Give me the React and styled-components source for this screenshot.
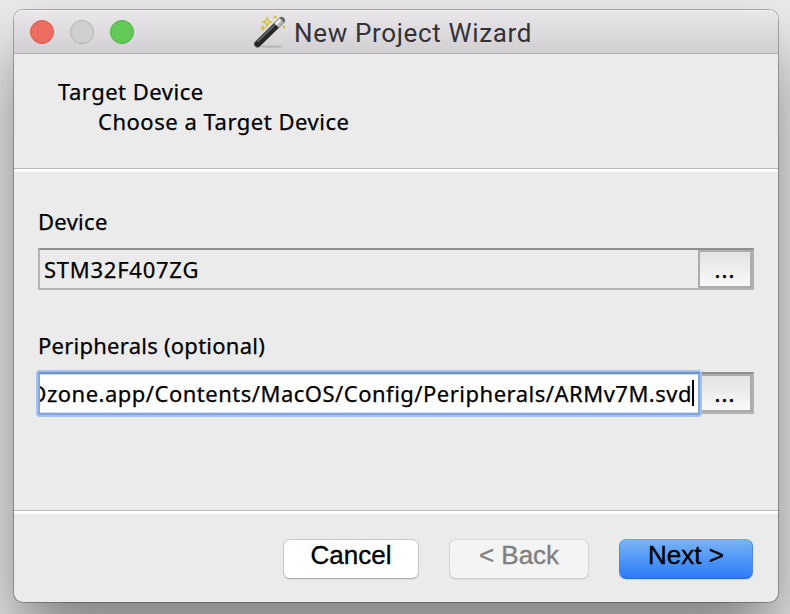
import React from "react";
import styled, { createGlobalStyle } from "styled-components";

const Global = createGlobalStyle`
  * { box-sizing: border-box; }
  html, body { margin: 0; height: 100%; overflow: hidden; background: #fff; }
  button, input { margin: 0; padding: 0; }
`;

const Desktop = styled.main`
  width: 790px;
  height: 614px;
  padding: 10px 12px 12px 14px;
  overflow: hidden;
  background: #ececec;
  color: #000;
  font: 22px/30px "Noto Sans", "Open Sans", sans-serif;
  -webkit-text-stroke: 0.25px;
`;

const Window = styled.section`
  display: flex;
  flex-direction: column;
  width: 764px;
  height: 592px;
  border-radius: 9px;
  background: #ebebeb;
  box-shadow: 0 0 0 1px rgba(0, 0, 0, 0.27), 0 40px 70px rgba(0, 0, 0, 0.46);
`;

const TitleBar = styled.header`
  display: flex;
  align-items: center;
  height: 44px;
  flex: none;
  padding-left: 16px;
  border-bottom: 1px solid #adabad;
  border-radius: 9px 9px 0 0;
  background: linear-gradient(#e9e7e9, #d1cfd1);
  box-shadow: inset 0 1px #f5f4f5;
`;

const Lights = styled.div`
  display: flex;
  gap: 16px;
  width: 223px;
`;

const Light = styled.span`
  width: 24px;
  height: 24px;
  border: 1px solid ${(p) => p.$edge};
  border-radius: 50%;
  background: ${(p) => p.$fill};
`;

const Title = styled.h1`
  margin: 2px 0 0 7px;
  color: #343236;
  font: 400 26px/40px Roboto, sans-serif;
  letter-spacing: 0.65px;
  white-space: nowrap;
  -webkit-text-stroke: 0;
`;

const Heading = styled.div`
  flex: none;
  height: 118px;
  padding: 22px 0 0 44px;
  border-bottom: 3px solid #fff;
  box-shadow: inset 0 -1px #bababa;
`;

const Line = styled.div`
  padding-left: ${(p) => p.$indent || 0}px;
  letter-spacing: ${(p) => p.$track || 0}px;
  white-space: nowrap;
`;

const Form = styled.div`
  flex: none;
  height: 342px;
  padding: 34px 24px 0;
  border-bottom: 3px solid #fff;
  box-shadow: inset 0 -1px #bababa;
`;

const Group = styled.div`
  height: 124px;
`;

const FieldFrame = styled.div`
  position: relative;
  margin-top: 12px;
`;

const Field = styled.div`
  display: flex;
  width: 716px;
  height: 42px;
  border: 2px solid #b4b4b4;
  border-top-color: #8e8e8e;
  border-right-width: 1px;
`;

const Value = styled.div`
  position: relative;
  flex: 1;
  min-width: 0;
  display: flex;
  align-items: center;
  justify-content: ${(p) => (p.$focused ? "flex-end" : "flex-start")};
  padding: ${(p) => (p.$focused ? "0 6px 0 0" : "0 0 1px 4px")};
  overflow: hidden;
  white-space: nowrap;
  letter-spacing: ${(p) => p.$track || 0}px;
  background: ${(p) => (p.$focused ? "#fff" : "#ebebeb")};
`;

const Ring = styled.div`
  position: absolute;
  inset: -2px 52px -3px -2px;
  border: 2px solid #a3c2ee;
  border-radius: 4px;
  pointer-events: none;

  &::after {
    content: "";
    position: absolute;
    inset: 0;
    border: 2px solid #82a8de;
    border-top-color: #6e92c8;
    box-shadow: inset 0 1px #c9dcf6, inset 0 -1px #c9dcf6;
  }
`;

const Caret = styled.span`
  position: absolute;
  right: 4px;
  top: 6px;
  width: 2px;
  height: 26px;
  background: #000;
`;

const Browse = styled.button`
  flex: none;
  width: 55px;
  height: 38px;
  border: 2px solid #acacac;
  border-right-width: 3px;
  background: linear-gradient(#e3e3e3, #f9f9f9);
  color: #000;
  font: 22px/30px "Noto Sans", sans-serif;
  letter-spacing: 1.1px;
  -webkit-text-stroke: 0.4px;
`;

const Footer = styled.footer`
  display: flex;
  justify-content: flex-end;
  padding: 25px 25px 0 0;
`;

const looks = {
  plain: "background:#fff; border-color:#c8c8c8 #c5c5c5 #adadad; color:#000;",
  disabled: "background:#f4f4f4; border-color:#d8d8d8 #d6d6d6 #cdcdcd; color:#808080;",
  primary:
    "background:linear-gradient(#7bb3f5, #4f97f7 50%, #2f7bf8); border-color:#6aa1e4 #4a88ee #2467ee; color:#000;",
};

const Button = styled.button`
  width: ${(p) => p.$width}px;
  height: 40px;
  margin-left: ${(p) => p.$gap || 0}px;
  padding-bottom: 9px;
  border: 1px solid;
  border-radius: 7px;
  box-shadow: 0 1px 1px rgba(0, 0, 0, 0.07);
  font: 26px/30px "Liberation Sans", Arial, sans-serif;
  -webkit-text-stroke: 0.35px;
  ${(p) => looks[p.$look]}
`;

function Wand() {
  return (
    <svg width="34" height="34" viewBox="0 0 34 34" aria-hidden="true">
      <ellipse cx="18" cy="31.5" rx="12" ry="1.3" fill="#aaa8aa" opacity=".65" />
      <path d="M4.5 29 28.5 5.5" stroke="#6a6a6a" strokeWidth="7" strokeLinecap="round" />
      <path d="M4.8 28.8 23 11" stroke="#262626" strokeWidth="6" strokeLinecap="round" />
      <path d="M4.5 26.7 22 9.7" stroke="#707070" strokeWidth="1.5" />
      <path d="M23.5 10.6 28.7 5.4" stroke="#b9b8b9" strokeWidth="5.6" />
      <path d="M22.5 9.3 27.5 4.4" stroke="#fafafa" strokeWidth="2.4" />
      <g fill="#d2bd3d">
        <path d="m14 1 1.7 4.3L20 7l-4.3 1.7L14 13l-1.7-4.3L8 7l4.3-1.7Z" />
        <path d="m10 10 1.1 1.9L13 13l-1.9 1.1L10 16l-1.1-1.9L7 13l1.9-1.1Z" />
        <path d="m22 0 1.7 2L22 4l-1.7-2ZM31 10l1.5 2-1.5 2-1.5-2Z" />
      </g>
      <path d="m14 4 .8 2.2L17 7l-2.2.8L14 10l-.8-2.2L11 7l2.2-.8Z" fill="#eee08b" />
    </svg>
  );
}

export default function App() {
  return (
    <>
      <Global />
      <Desktop>
        <Window>
          <TitleBar>
            <Lights>
              <Light $fill="#ed6c60" $edge="#d9584e" />
              <Light $fill="#d0d0d0" $edge="#b3b2b3" />
              <Light $fill="#63c956" $edge="#4faf43" />
            </Lights>
            <Wand />
            <Title>New Project Wizard</Title>
          </TitleBar>
          <Heading>
            <Line $track={0.5}>Target Device</Line>
            <Line $indent={40} $track={0.52}>Choose a Target Device</Line>
          </Heading>
          <Form>
            <Group>
              <Line $track={0.3}>Device</Line>
              <FieldFrame>
                <Field>
                  <Value $track={0.75}>STM32F407ZG</Value>
                  <Browse>...</Browse>
                </Field>
              </FieldFrame>
            </Group>
            <Group>
              <Line $track={0.25}>Peripherals (optional)</Line>
              <FieldFrame>
                <Field>
                  <Value $focused $track={0.5}>
                    Ozone.app/Contents/MacOS/Config/Peripherals/ARMv7M.svd
                    <Caret />
                  </Value>
                  <Browse>...</Browse>
                </Field>
                <Ring />
              </FieldFrame>
            </Group>
          </Form>
          <Footer>
            <Button $look="plain" $width={136}>Cancel</Button>
            <Button $look="disabled" $width={140} $gap={30} disabled>&lt; Back</Button>
            <Button $look="primary" $width={134} $gap={30}>Next &gt;</Button>
          </Footer>
        </Window>
      </Desktop>
    </>
  );
}
